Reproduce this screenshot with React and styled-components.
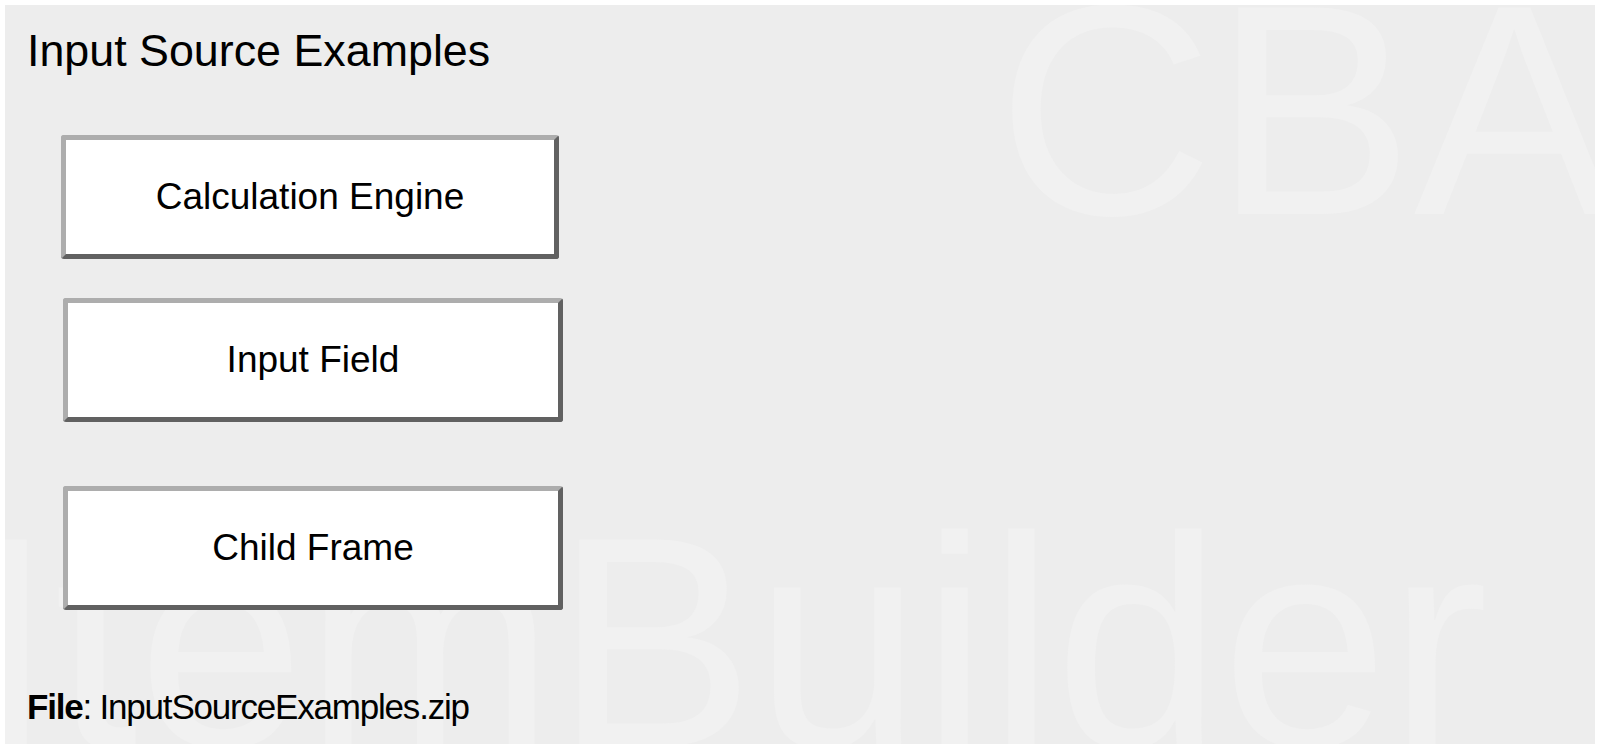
import React from "react";
import styled, { createGlobalStyle } from "styled-components";

const GlobalStyle = createGlobalStyle`
  html, body {
    margin: 0;
    padding: 0;
    background: #ffffff;
  }
  body {
    font-family: "Liberation Sans", Arial, sans-serif;
    color: #000;
  }
`;

const Page = styled.div`
  padding: 5px 0 0 5px;
`;

const Panel = styled.section`
  position: relative;
  overflow: hidden;
  box-sizing: border-box;
  width: 1590px;
  height: 739px;
  padding: 19px 20px 17px 21px;
  background: #ededed;
  display: flex;
  flex-direction: column;
`;

const Watermark = styled.span`
  position: absolute;
  left: ${(p) => p.$left}px;
  top: ${(p) => p.$top}px;
  font-family: "Liberation Sans", Arial, sans-serif;
  font-size: 300px;
  line-height: 300px;
  color: #f1f1f1;
  white-space: nowrap;
  pointer-events: none;
  user-select: none;
`;

const Content = styled.div`
  position: relative;
  z-index: 1;
  display: flex;
  flex-direction: column;
  flex: 1;
`;

const Title = styled.h1`
  margin: 0 0 0 1px;
  font-size: 44.8px;
  line-height: 52px;
  font-weight: 400;
`;

const ButtonList = styled.div`
  display: flex;
  flex-direction: column;
  margin-top: 59px;
`;

const SourceButton = styled.button`
  box-sizing: border-box;
  display: flex;
  align-items: center;
  justify-content: center;
  width: ${(p) => p.$width}px;
  height: 124px;
  margin: ${(p) => p.$gap}px 0 0 ${(p) => p.$indent}px;
  padding: 0;
  background: #ffffff;
  border: 5px solid;
  border-color: #adadad #616161 #616161 #adadad;
  border-radius: 3px;
  font-family: "Liberation Sans", Arial, sans-serif;
  font-size: 37px;
  color: #000;
  cursor: pointer;
`;

const Footer = styled.p`
  margin: auto 0 0 1px;
  font-size: 35px;
  line-height: 40px;
  letter-spacing: -1.2px;
  white-space: nowrap;
`;

const Label = styled.strong`
  font-weight: 700;
`;

const buttons = [
  { label: "Calculation Engine", width: 498, indent: 35, gap: 0 },
  { label: "Input Field", width: 500, indent: 37, gap: 39 },
  { label: "Child Frame", width: 500, indent: 37, gap: 64 },
];

export default function App() {
  return (
    <>
      <GlobalStyle />
      <Page>
        <Panel>
          <Watermark $left={992} $top={-45}>CBA</Watermark>
          <Watermark $left={-34} $top={487}>ItemBuilder</Watermark>
          <Content>
            <Title>Input Source Examples</Title>
            <ButtonList>
              {buttons.map((b) => (
                <SourceButton
                  key={b.label}
                  type="button"
                  $width={b.width}
                  $indent={b.indent}
                  $gap={b.gap}
                >
                  {b.label}
                </SourceButton>
              ))}
            </ButtonList>
            <Footer>
              <Label>File</Label>: InputSourceExamples.zip
            </Footer>
          </Content>
        </Panel>
      </Page>
    </>
  );
}
